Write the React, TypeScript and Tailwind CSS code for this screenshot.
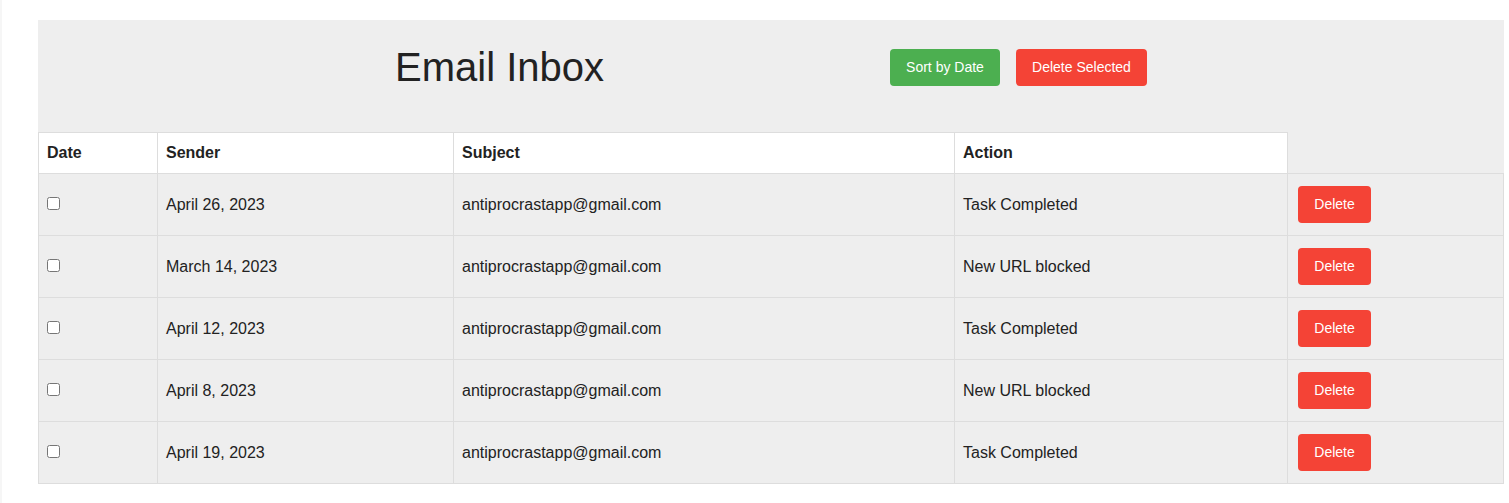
import React from 'react';

const emails = [
  { date: 'April 26, 2023', sender: 'antiprocrastapp@gmail.com', subject: 'Task Completed' },
  { date: 'March 14, 2023', sender: 'antiprocrastapp@gmail.com', subject: 'New URL blocked' },
  { date: 'April 12, 2023', sender: 'antiprocrastapp@gmail.com', subject: 'Task Completed' },
  { date: 'April 8, 2023', sender: 'antiprocrastapp@gmail.com', subject: 'New URL blocked' },
  { date: 'April 19, 2023', sender: 'antiprocrastapp@gmail.com', subject: 'Task Completed' },
];

export default function App() {
  return (
    <div
      className="min-h-[503px] bg-white border-l-2 border-[#f6f6f6] pl-[36px] pr-[5px] pt-5 text-[#222]"
      style={{ fontFamily: '"Liberation Sans", Arial, sans-serif' }}
    >
      <div className="bg-[#eee]">
        {/* Header */}
        <div className="flex items-center justify-center gap-[286px] pt-[24px] pb-[42px]">
          <h1 className="text-[40px] leading-[46px] font-normal">Email Inbox</h1>
          <div className="flex gap-4">
            <button className="h-[37px] w-[110px] rounded bg-[#4caf50] text-white text-[14px]">Sort by Date</button>
            <button className="h-[37px] w-[131px] rounded bg-[#f44336] text-white text-[14px]">Delete Selected</button>
          </div>
        </div>

        {/* Table */}
        <table className="w-full border-collapse table-fixed text-[16px]">
          <colgroup>
            <col className="w-[119px]" />
            <col className="w-[296px]" />
            <col className="w-[501px]" />
            <col className="w-[333px]" />
            <col />
          </colgroup>
          <thead>
            <tr className="h-[41px]">
              <th className="bg-white border border-[#ddd] px-2 text-left font-bold">Date</th>
              <th className="bg-white border border-[#ddd] px-2 text-left font-bold">Sender</th>
              <th className="bg-white border border-[#ddd] px-2 text-left font-bold">Subject</th>
              <th className="bg-white border border-[#ddd] px-2 text-left font-bold">Action</th>
            </tr>
          </thead>
          <tbody>
            {emails.map((e, i) => (
              <tr key={i}>
                <td className="border border-[#ddd] px-2 py-3 align-middle">
                  <input type="checkbox" className="w-[13px] h-[13px]" />
                </td>
                <td className="border border-[#ddd] px-2 py-3 align-middle">{e.date}</td>
                <td className="border border-[#ddd] px-2 py-3 align-middle">{e.sender}</td>
                <td className="border border-[#ddd] px-2 py-3 align-middle">{e.subject}</td>
                <td className="border border-[#ddd] px-[10px] py-3 align-middle">
                  <button className="h-[37px] w-[73px] rounded bg-[#f44336] text-white text-[14px] block">Delete</button>
                </td>
              </tr>
            ))}
          </tbody>
        </table>
      </div>
    </div>
  );
}
